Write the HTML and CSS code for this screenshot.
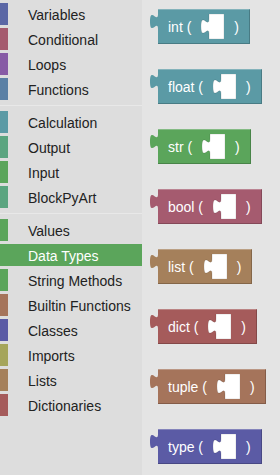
FILE: index.html
```html
<!DOCTYPE html>
<html lang="en">
<head>
    <meta charset="UTF-8">
    <meta name="viewport" content="width=device-width, initial-scale=1.0">
    <title>BlockPy - Data Types</title>
    <link rel="stylesheet" href="styles.css">
</head>
<body>
    <div class="editor">
        <nav class="toolbox">
            <div class="cat"><span class="swatch hue-variables"></span><span class="label">Variables</span></div>
            <div class="cat"><span class="swatch hue-logic"></span><span class="label">Conditional</span></div>
            <div class="cat"><span class="swatch hue-loops"></span><span class="label">Loops</span></div>
            <div class="cat"><span class="swatch hue-functions"></span><span class="label">Functions</span></div>
            <div class="separator"></div>
            <div class="cat"><span class="swatch hue-math"></span><span class="label">Calculation</span></div>
            <div class="cat"><span class="swatch hue-io"></span><span class="label">Output</span></div>
            <div class="cat"><span class="swatch hue-text"></span><span class="label">Input</span></div>
            <div class="cat"><span class="swatch hue-io"></span><span class="label">BlockPyArt</span></div>
            <div class="separator"></div>
            <div class="cat"><span class="swatch hue-text"></span><span class="label">Values</span></div>
            <div class="cat selected"><span class="swatch hue-text"></span><span class="label">Data Types</span></div>
            <div class="cat"><span class="swatch hue-text"></span><span class="label">String Methods</span></div>
            <div class="cat"><span class="swatch hue-builtin"></span><span class="label">Builtin Functions</span></div>
            <div class="cat"><span class="swatch hue-classes"></span><span class="label">Classes</span></div>
            <div class="cat"><span class="swatch hue-imports"></span><span class="label">Imports</span></div>
            <div class="cat"><span class="swatch hue-lists"></span><span class="label">Lists</span></div>
            <div class="cat"><span class="swatch hue-dicts"></span><span class="label">Dictionaries</span></div>
        </nav>

        <div class="flyout">
            <div class="block hue-math">
                <span>int (</span>
                <svg class="hole" width="23" height="25" viewBox="0 0 23 25"><path d="M8,0 V5 C8,15 0,-3 0,12.5 S8,10 8,20 V25 H23 V0 Z"/></svg>
                <span>)</span>
            </div>
            <div class="block hue-math">
                <span>float (</span>
                <svg class="hole" width="23" height="25" viewBox="0 0 23 25"><path d="M8,0 V5 C8,15 0,-3 0,12.5 S8,10 8,20 V25 H23 V0 Z"/></svg>
                <span>)</span>
            </div>
            <div class="block hue-text">
                <span>str (</span>
                <svg class="hole" width="23" height="25" viewBox="0 0 23 25"><path d="M8,0 V5 C8,15 0,-3 0,12.5 S8,10 8,20 V25 H23 V0 Z"/></svg>
                <span>)</span>
            </div>
            <div class="block hue-logic">
                <span>bool (</span>
                <svg class="hole" width="23" height="25" viewBox="0 0 23 25"><path d="M8,0 V5 C8,15 0,-3 0,12.5 S8,10 8,20 V25 H23 V0 Z"/></svg>
                <span>)</span>
            </div>
            <div class="block hue-lists">
                <span>list (</span>
                <svg class="hole" width="23" height="25" viewBox="0 0 23 25"><path d="M8,0 V5 C8,15 0,-3 0,12.5 S8,10 8,20 V25 H23 V0 Z"/></svg>
                <span>)</span>
            </div>
            <div class="block hue-dicts">
                <span>dict (</span>
                <svg class="hole" width="23" height="25" viewBox="0 0 23 25"><path d="M8,0 V5 C8,15 0,-3 0,12.5 S8,10 8,20 V25 H23 V0 Z"/></svg>
                <span>)</span>
            </div>
            <div class="block hue-builtin">
                <span>tuple (</span>
                <svg class="hole" width="23" height="25" viewBox="0 0 23 25"><path d="M8,0 V5 C8,15 0,-3 0,12.5 S8,10 8,20 V25 H23 V0 Z"/></svg>
                <span>)</span>
            </div>
            <div class="block hue-classes">
                <span>type (</span>
                <svg class="hole" width="23" height="25" viewBox="0 0 23 25"><path d="M8,0 V5 C8,15 0,-3 0,12.5 S8,10 8,20 V25 H23 V0 Z"/></svg>
                <span>)</span>
            </div>
        </div>
    </div>
</body>
</html>
```

FILE: styles.css
```css
html, body {
    margin: 0;
    padding: 0;
    height: 100%;
    overflow: hidden;
}
body {
    font-family: "Liberation Sans", Arial, sans-serif;
    font-size: 14px;
    background-color: #e4e4e4;
}
.editor {
    display: flex;
    height: 475px;
}
.toolbox {
    width: 142px;
    flex-shrink: 0;
    background-color: #dddddd;
    padding-top: 3px;
    color: #222;
}
.cat {
    display: flex;
    align-items: center;
    height: 22px;
    margin-bottom: 3px;
}
.swatch {
    width: 8px;
    height: 22px;
}
.label {
    padding: 2px 0 0 20px;
    white-space: nowrap;
}
.cat.selected {
    background-color: #5ba55b;
    color: white;
}
.separator {
    height: 1px;
    background-color: #e8e8e8;
    margin: 5px 0 5px 0;
}
.flyout {
    flex: 1;
    display: flex;
    flex-direction: column;
    align-items: flex-start;
    gap: 25px;
    padding: 9px 0 0 16px;
}
.block {
    position: relative;
    display: flex;
    align-items: center;
    gap: 10px;
    height: 35px;
    box-sizing: border-box;
    padding: 0 10px;
    color: white;
    border-top: 1px solid rgba(255, 255, 255, 0.25);
    border-right: 1px solid rgba(0, 0, 0, 0.2);
    border-bottom: 1px solid rgba(0, 0, 0, 0.2);
    white-space: nowrap;
}
.block::before {
    content: "";
    position: absolute;
    left: -8px;
    top: 4px;
    width: 8px;
    height: 15px;
    background: inherit;
    clip-path: path('M8,0 C8,10 0,-8 0,7.5 S8,5 8,15 Z');
}
.hole {
    display: block;
}
.hole path {
    fill: #fff;
    stroke: rgba(0, 0, 0, 0.12);
    stroke-width: 1;
}

/* category colours */
.hue-variables { background-color: #5b67a5; }
.hue-logic { background-color: #a55b6f; }
.hue-loops { background-color: #875ba5; }
.hue-functions { background-color: #5b80a5; }
.hue-math { background-color: #5b9aa5; }
.hue-io { background-color: #5ba580; }
.hue-text { background-color: #5ba55b; }
.hue-builtin { background-color: #a5745b; }
.hue-classes { background-color: #5b5ba5; }
.hue-imports { background-color: #a5a55b; }
.hue-lists { background-color: #a5805b; }
.hue-dicts { background-color: #a55b5b; }
```
